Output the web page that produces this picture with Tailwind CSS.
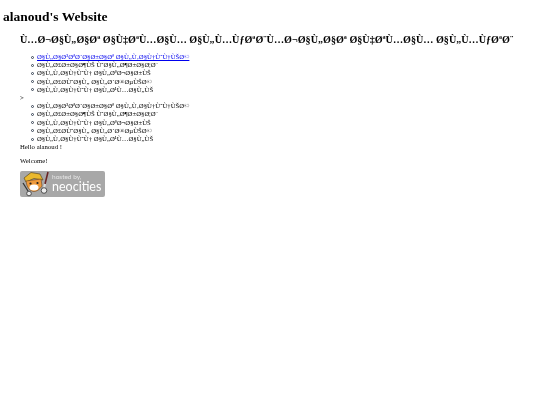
<!DOCTYPE html>
<html lang="en">
<head>
<meta charset="UTF-8">
<script src="https://cdn.jsdelivr.net/npm/@tailwindcss/browser@4"></script>
<title>alanoud's Website</title>
</head>
<body class="bg-white text-black font-['Liberation_Serif',serif] text-[6.75px] leading-[8.2px] blur-[0.3px]">
  <h1 class="font-bold text-[13.5px] leading-[16px] pt-[9px] pl-[3px]">alanoud's Website</h1>

  <div class="pl-[20px] pt-[8px]">
    <h2 class="font-bold text-[10.15px] leading-[14px]">Ù…Ø¬Ø§Ù„Ø§Øª Ø§Ù‡ØªÙ…Ø§Ù… Ø§Ù„Ù…ÙƒØªØ¨Ù…Ø¬Ø§Ù„Ø§Øª Ø§Ù‡ØªÙ…Ø§Ù… Ø§Ù„Ù…ÙƒØªØ¨</h2>

    <ul class="pl-[11px] mt-[6px]">
      <li class="flex items-center gap-[3px]"><span class="w-[3px] h-[3px] rounded-full border-[0.5px] border-gray-700"></span><a href="#" class="text-[#0000ee] underline">Ø§Ù„Ø§Ø³ØªØ´Ø§Ø±Ø§Øª Ø§Ù„Ù‚Ø§Ù†ÙˆÙ†ÙŠØ©</a></li>
      <li class="flex items-center gap-[3px]"><span class="w-[3px] h-[3px] rounded-full border-[0.5px] border-gray-700"></span>Ø§Ù„Ø£Ø±Ø§Ø¶ÙŠ ÙˆØ§Ù„Ø¶Ø±Ø§Ø¦Ø¨</li>
      <li class="flex items-center gap-[3px]"><span class="w-[3px] h-[3px] rounded-full border-[0.5px] border-gray-700"></span>Ø§Ù„Ù‚Ø§Ù†ÙˆÙ† Ø§Ù„ØªØ¬Ø§Ø±ÙŠ</li>
      <li class="flex items-center gap-[3px]"><span class="w-[3px] h-[3px] rounded-full border-[0.5px] border-gray-700"></span>Ø§Ù„Ø£Ø­ÙˆØ§Ù„ Ø§Ù„Ø´Ø®ØµÙŠØ©</li>
      <li class="flex items-center gap-[3px]"><span class="w-[3px] h-[3px] rounded-full border-[0.5px] border-gray-700"></span>Ø§Ù„Ù‚Ø§Ù†ÙˆÙ† Ø§Ù„Ø¹Ù…Ø§Ù„ÙŠ</li>
    </ul>
    <p>&gt;</p>
    <ul class="pl-[11px]">
      <li class="flex items-center gap-[3px]"><span class="w-[3px] h-[3px] rounded-full border-[0.5px] border-gray-700"></span>Ø§Ù„Ø§Ø³ØªØ´Ø§Ø±Ø§Øª Ø§Ù„Ù‚Ø§Ù†ÙˆÙ†ÙŠØ©</li>
      <li class="flex items-center gap-[3px]"><span class="w-[3px] h-[3px] rounded-full border-[0.5px] border-gray-700"></span>Ø§Ù„Ø£Ø±Ø§Ø¶ÙŠ ÙˆØ§Ù„Ø¶Ø±Ø§Ø¦Ø¨</li>
      <li class="flex items-center gap-[3px]"><span class="w-[3px] h-[3px] rounded-full border-[0.5px] border-gray-700"></span>Ø§Ù„Ù‚Ø§Ù†ÙˆÙ† Ø§Ù„ØªØ¬Ø§Ø±ÙŠ</li>
      <li class="flex items-center gap-[3px]"><span class="w-[3px] h-[3px] rounded-full border-[0.5px] border-gray-700"></span>Ø§Ù„Ø£Ø­ÙˆØ§Ù„ Ø§Ù„Ø´Ø®ØµÙŠØ©</li>
      <li class="flex items-center gap-[3px]"><span class="w-[3px] h-[3px] rounded-full border-[0.5px] border-gray-700"></span>Ø§Ù„Ù‚Ø§Ù†ÙˆÙ† Ø§Ù„Ø¹Ù…Ø§Ù„ÙŠ</li>
    </ul>
    <p>Hello alanoud !</p>
    <p class="mt-[6px]">Welcome!</p>

    <!-- hosted by neocities badge -->
    <div class="mt-[5px] w-[85px] h-[26px] rounded-[2px] bg-[#a8a8a8] flex items-center overflow-hidden">
      <svg width="31" height="26" viewBox="0 0 31 26" class="shrink-0">
        <path d="M4 7 L11 1.5 L20 3 L23 9 L14 7.5 L6 11 Z" fill="#eab92e" stroke="#4a3a14" stroke-width="0.6"/>
        <path d="M6 10 L21 8 L22 15 Q18 21 13 20.5 Q7 19 6 10 Z" fill="#ee9a3c" stroke="#5a3414" stroke-width="0.5"/>
        <ellipse cx="14" cy="16.5" rx="4.5" ry="3" fill="#fff"/>
        <circle cx="10.5" cy="12.5" r="1.1" fill="#222"/>
        <circle cx="17.5" cy="12" r="1.1" fill="#222"/>
        <path d="M28 1 L25 13" stroke="#6b2424" stroke-width="1.6"/>
        <path d="M25 13 L24 17" stroke="#ddd" stroke-width="2"/>
        <circle cx="24" cy="19.5" r="2.8" fill="#eee" stroke="#333" stroke-width="0.8"/>
        <circle cx="9" cy="22.5" r="2.3" fill="#eee" stroke="#333" stroke-width="0.8"/>
        <path d="M3 12 L8 20" stroke="#333" stroke-width="1.3"/>
      </svg>
      <div class="font-['Lato',sans-serif] pl-[1px]">
        <div class="text-[6.5px] leading-[7px] text-[#e6e6e6]">hosted by,</div>
        <div class="text-[12.5px] leading-[14px] text-white">neocities</div>
      </div>
    </div>
  </div>
</body>
</html>
